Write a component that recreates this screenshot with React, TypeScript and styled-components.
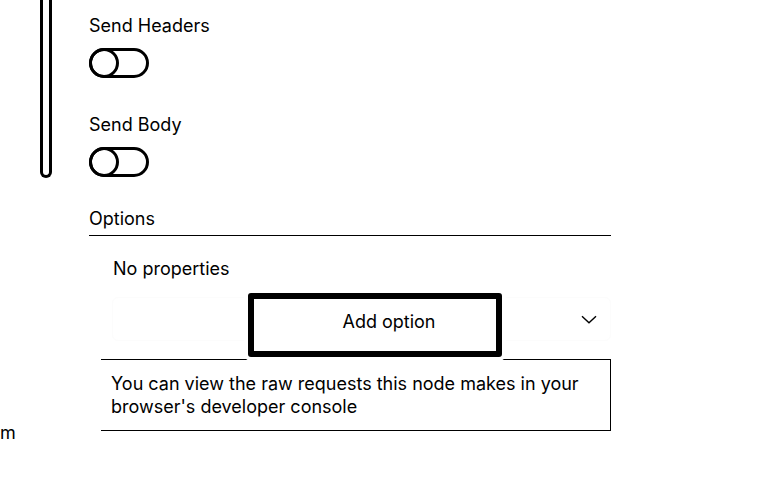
import React from "react";
import styled, { createGlobalStyle } from "styled-components";

const GlobalStyle = createGlobalStyle`
  html, body { margin: 0; padding: 0; background: #fff; }
  body { font-family: Inter, "Liberation Sans", sans-serif; color: #000; }
  * { box-sizing: border-box; }
`;

const Page = styled.div`
  display: flex;
  width: 762px;
  height: 480px;
  overflow: hidden;
  background: #fff;
`;

const Rail = styled.div`
  width: 89px;
  flex: none;
  display: flex;
  flex-direction: column;
  align-items: flex-start;
`;

const Track = styled.div`
  margin-left: 40px;
  width: 12px;
  height: 178px;
  border: 3px solid #000;
  border-top: none;
  border-radius: 0 0 6px 6px;
`;

const CutLabel = styled.span`
  margin-top: 243px;
  font-size: 18px;
  line-height: 24px;
`;

const Main = styled.div`
  width: 522px;
  flex: none;
  padding-top: 14px;
  display: flex;
  flex-direction: column;
`;

const Field = styled.div<{ $gap: number }>`
  display: flex;
  flex-direction: column;
  align-items: flex-start;
  margin-bottom: ${(p) => p.$gap}px;
`;

const Label = styled.div`
  font-size: 18px;
  line-height: 24px;
  margin-bottom: 10px;
`;

const Toggle = styled.div`
  display: flex;
  width: 60px;
  height: 30px;
  border: 3px solid #000;
  border-radius: 15px;
`;

const Knob = styled.span`
  width: 30px;
  height: 30px;
  margin: -3px 0 0 -3px;
  border: 3px solid #000;
  border-radius: 50%;
`;

const SectionTitle = styled.div`
  font-size: 18px;
  line-height: 24px;
  padding-bottom: 4px;
  border-bottom: 1px solid #000;
`;

const OptionsBody = styled.div`
  margin-left: 12px;
  display: flex;
  flex-direction: column;
`;

const Empty = styled.div`
  margin-top: 21px;
  padding-left: 12px;
  font-size: 18px;
  line-height: 24px;
`;

const SelectRow = styled.div`
  display: grid;
  margin-top: 12px;
`;

const SelectBox = styled.div`
  grid-area: 1 / 1;
  align-self: start;
  margin: 4px 0 0 11px;
  height: 44px;
  border: 1px solid #fcfcfc;
  border-radius: 6px;
  display: flex;
  align-items: center;
  justify-content: flex-end;
  padding-right: 13px;
`;

const AddButton = styled.button`
  grid-area: 1 / 1;
  justify-self: start;
  position: relative;
  z-index: 1;
  margin-left: 147px;
  width: 254px;
  height: 64px;
  border: 6px solid #000;
  border-radius: 3px;
  background: #fff;
  box-shadow: 0 0 0 4px #fff;
  padding: 11px 0 17px 28px;
  font-family: inherit;
  font-size: 18px;
  line-height: 24px;
  color: #000;
  text-align: center;
`;

const Notice = styled.div`
  margin-top: 2px;
  border: 1px solid #000;
  border-left: none;
  padding: 12px 10px 12px 10px;
  font-size: 18px;
  line-height: 23px;
`;

const Chevron = () => (
  <svg width="16" height="9" viewBox="0 0 16 9" fill="none">
    <path d="M1 1.2 L8 7.8 L15 1.2" stroke="#000" strokeWidth="1.4" />
  </svg>
);

export default function App() {
  return (
    <Page>
      <GlobalStyle />
      <Rail>
        <Track />
        <CutLabel>m</CutLabel>
      </Rail>
      <Main>
        <Field $gap={35}>
          <Label>Send Headers</Label>
          <Toggle>
            <Knob />
          </Toggle>
        </Field>
        <Field $gap={30}>
          <Label>Send Body</Label>
          <Toggle>
            <Knob />
          </Toggle>
        </Field>
        <SectionTitle>Options</SectionTitle>
        <OptionsBody>
          <Empty>No properties</Empty>
          <SelectRow>
            <SelectBox>
              <Chevron />
            </SelectBox>
            <AddButton>Add option</AddButton>
          </SelectRow>
          <Notice>
            You can view the raw requests this node makes in your browser's
            developer console
          </Notice>
        </OptionsBody>
      </Main>
    </Page>
  );
}
